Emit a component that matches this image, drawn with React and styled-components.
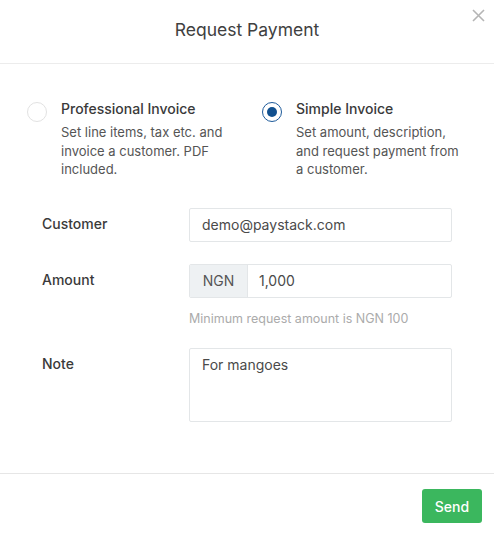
import React from "react"
import styled, { createGlobalStyle } from "styled-components"

const GlobalStyle = createGlobalStyle`
  body {
    margin: 0;
    background: #fff;
    font-family: "Inter", "Liberation Sans", sans-serif;
    color: #4a4a4a;
  }
`

function Radio({ checked }) {
  return (
    <RadioCircle checked={checked}>
      {checked && <RadioDot />}
    </RadioCircle>
  )
}

function Option({ checked, title, text }) {
  return (
    <OptionBox>
      <Radio checked={checked} />
      <OptionText>
        <OptionTitle>{title}</OptionTitle>
        <OptionDesc>{text}</OptionDesc>
      </OptionText>
    </OptionBox>
  )
}

function App() {
  return (
    <Modal>
      <GlobalStyle />
      <Header>
        <Title>Request Payment</Title>
        <Close aria-label="close">
          <svg width="13" height="13" viewBox="0 0 13 13">
            <path d="M1 1 L12 12 M12 1 L1 12" stroke="#b5b5b5" strokeWidth="1.6" />
          </svg>
        </Close>
      </Header>

      <Body>
        <Options>
          <Option
            title="Professional Invoice"
            text="Set line items, tax etc. and invoice a customer. PDF included."
          />
          <Option
            checked
            title="Simple Invoice"
            text="Set amount, description, and request payment from a customer."
          />
        </Options>

        <Form>
          <Row>
            <Label>Customer</Label>
            <Field>
              <Input>demo@paystack.com</Input>
            </Field>
          </Row>
          <Row>
            <Label>Amount</Label>
            <Field>
              <Group>
                <Addon>NGN</Addon>
                <GroupInput>1,000</GroupInput>
              </Group>
              <Help>Minimum request amount is NGN 100</Help>
            </Field>
          </Row>
          <Row>
            <Label>Note</Label>
            <Field>
              <TextArea>For mangoes</TextArea>
            </Field>
          </Row>
        </Form>
      </Body>

      <Footer>
        <SendButton>Send</SendButton>
      </Footer>
    </Modal>
  )
}

const Modal = styled.div`
  width: 494px;
  height: 536px;
  background: #fff;
  display: flex;
  flex-direction: column;
`

const Header = styled.div`
  position: relative;
  height: 63px;
  border-bottom: 1px solid #ececec;
  display: flex;
  align-items: center;
  justify-content: center;
`

const Title = styled.h1`
  margin: 0 0 4px 0;
  font-size: 17.5px;
  font-weight: 400;
  color: #404040;
`

const Close = styled.div`
  position: absolute;
  top: 9px;
  right: 9px;
  display: flex;
`

const Body = styled.div`
  flex: 1;
  padding: 36px 0 0 0;
`

const Options = styled.div`
  display: grid;
  grid-template-columns: 235px 1fr;
  padding-left: 27px;
`

const OptionBox = styled.div`
  display: flex;
  gap: 14px;
`

const RadioCircle = styled.div`
  flex: none;
  width: 20px;
  height: 20px;
  margin-top: 2px;
  border-radius: 50%;
  box-sizing: border-box;
  border: ${p => (p.checked ? "1.5px solid #1d5a9a" : "1px solid #e2e2e2")};
  display: flex;
  align-items: center;
  justify-content: center;
`

const RadioDot = styled.div`
  width: 10px;
  height: 10px;
  border-radius: 50%;
  background: #11508f;
`

const OptionText = styled.div`
  width: 165px;
`

const OptionTitle = styled.div`
  font-size: 14px;
  font-weight: 500;
  color: #3a3a3a;
  line-height: 18px;
`

const OptionDesc = styled.div`
  margin-top: 5px;
  font-size: 13px;
  line-height: 18.5px;
  color: #555;
`

const Form = styled.div`
  margin-top: 29px;
  padding: 0 42px;
  display: flex;
  flex-direction: column;
  gap: 22px;
`

const Row = styled.div`
  display: grid;
  grid-template-columns: 147px 1fr;
`

const Label = styled.div`
  padding-top: 7px;
  font-size: 14px;
  font-weight: 500;
  color: #3a3a3a;
`

const Field = styled.div`
  display: flex;
  flex-direction: column;
`

const Input = styled.div`
  height: 34px;
  box-sizing: border-box;
  border: 1px solid #e3e6e8;
  border-radius: 2px;
  padding: 0 12px;
  display: flex;
  align-items: center;
  font-size: 14px;
  color: #4a4a4a;
`

const Group = styled.div`
  display: flex;
  height: 34px;
  box-sizing: border-box;
  border: 1px solid #e3e6e8;
  border-radius: 2px;
  overflow: hidden;
`

const Addon = styled.div`
  width: 57px;
  background: #eef1f3;
  border-right: 1px solid #e3e6e8;
  display: flex;
  align-items: center;
  justify-content: center;
  font-size: 14px;
  color: #555;
`

const GroupInput = styled.div`
  flex: 1;
  padding: 0 11px;
  display: flex;
  align-items: center;
  font-size: 14px;
  color: #4a4a4a;
`

const Help = styled.div`
  margin-top: 13px;
  font-size: 12.5px;
  color: #ababab;
`

const TextArea = styled.div`
  height: 74px;
  box-sizing: border-box;
  border: 1px solid #e3e6e8;
  border-radius: 2px;
  padding: 7px 12px;
  font-size: 14px;
  color: #4a4a4a;
`

const Footer = styled.div`
  border-top: 1px solid #e6e6e6;
  height: 62px;
  padding: 0 12px 0 0;
  display: flex;
  align-items: flex-start;
  justify-content: flex-end;
`

const SendButton = styled.button`
  margin-top: 15px;
  width: 60px;
  height: 34px;
  border: none;
  border-radius: 3px;
  background: #3bb75e;
  color: #fff;
  font-family: inherit;
  font-size: 14px;
  font-weight: 500;
`

export default App
